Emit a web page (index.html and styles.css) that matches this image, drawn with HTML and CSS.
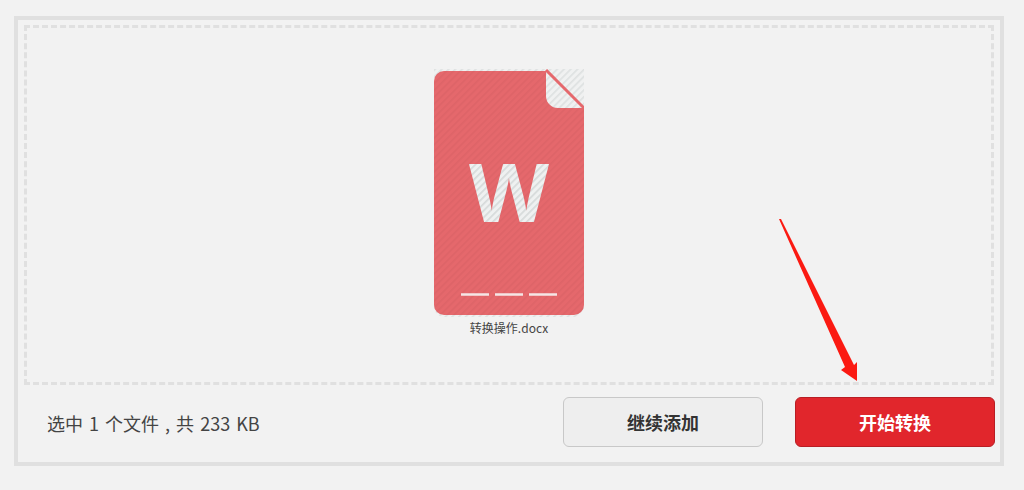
FILE: index.html
```html
<!DOCTYPE html>
<html lang="zh">
<head>
<meta charset="utf-8">
<title>转换操作</title>
<link rel="stylesheet" href="styles.css">
</head>
<body>
<main class="panel">
  <section class="dropzone">
    <figure class="file">
      <svg class="file-icon" width="150" height="248" viewBox="0 0 150 248" aria-hidden="true">
        <defs>
          <pattern id="hatch-bg" width="4.8" height="4.8" patternUnits="userSpaceOnUse" patternTransform="rotate(45)">
            <rect width="4.8" height="4.8" fill="#eff1f1"/>
            <rect width="1.7" height="4.8" fill="#d6dada"/>
          </pattern>
          <pattern id="hatch-red" width="4.8" height="4.8" patternUnits="userSpaceOnUse" patternTransform="rotate(45)">
            <rect width="4.8" height="4.8" fill="#e5686c"/>
            <rect width="1.7" height="4.8" fill="#de6468"/>
          </pattern>
        </defs>
        <path d="M0 0H150V238a10 10 0 0 1-10 10H10a10 10 0 0 1-10-10Z" fill="url(#hatch-bg)" opacity=".7"/>
        <path d="M10 2H112V27a12 12 0 0 0 12 12H150V236a10 10 0 0 1-10 10H10a10 10 0 0 1-10-10V12A10 10 0 0 1 10 2Z" fill="url(#hatch-red)"/>
        <path d="M112 1 150 39" stroke="#e5686c" stroke-width="3" fill="none"/>
        <text class="file-letter" x="75" y="153" text-anchor="middle" textLength="80" lengthAdjust="spacingAndGlyphs" fill="url(#hatch-bg)">W</text>
        <path d="M27 225.500H55M61 225.500H89M95 225.500H123" stroke="#f5e6e6" stroke-width="2.500" fill="none"/>
      </svg>
      <figcaption class="file-name">转换操作.docx</figcaption>
    </figure>
  </section>
  <footer class="footer">
    <p class="summary">选中 1 个文件 , 共 233 KB</p>
    <div class="actions">
      <button class="btn btn-add" type="button">继续添加</button>
      <button class="btn btn-start" type="button">开始转换</button>
    </div>
  </footer>
</main>
<svg class="arrow" width="90" height="170" viewBox="0 0 90 170" aria-hidden="true">
  <path d="M3 3 5 3 78 149 81 146 81 165 65 154 69 151Z" fill="#fb1a12"/>
</svg>
</body>
</html>
```
FILE: styles.css
```css
* { box-sizing: border-box; }
html, body { margin: 0; padding: 0; }
body {
  width: 1024px;
  height: 490px;
  padding: 16px 20px 24px 14px;
  background: #f2f2f2;
  overflow: hidden;
  font-family: "Noto Sans CJK SC", "Liberation Sans", sans-serif;
  color: #333;
}
.panel {
  width: 990px;
  height: 450px;
  border: 4px solid #e0e0e0;
  padding: 5px 6px 0;
  display: flex;
  flex-direction: column;
}
.dropzone {
  height: 360px;
  border: 3px dashed #e0e0e0;
  display: flex;
  justify-content: center;
  padding-top: 41px;
}
.file {
  margin: 0;
  width: 150px;
  display: flex;
  flex-direction: column;
  align-items: center;
}
.file-icon { display: block; flex: none; }
.file-letter {
  font-family: "Open Sans", "Liberation Sans", sans-serif;
  font-weight: 700;
  font-size: 81px;
}
.file-name {
  margin-top: 3px;
  font-size: 12px;
  line-height: 16px;
  white-space: nowrap;
  color: #444;
}
.footer {
  flex: 1;
  display: flex;
  align-items: flex-start;
  justify-content: space-between;
  padding: 12px 0 0 23px;
  margin-right: -1px;
}
.summary {
  margin: 0;
  height: 50px;
  line-height: 52px;
  font-size: 18px;
  color: #444;
  word-spacing: 2px;
}
.actions { display: flex; gap: 32px; }
.btn {
  width: 200px;
  height: 50px;
  border-radius: 6px;
  font-family: "Noto Sans CJK SC", "Liberation Sans", sans-serif;
  font-size: 18px;
  font-weight: 700;
  padding: 0;
}
.btn-add {
  background: #eee;
  border: 1px solid #c8c8c8;
  color: #333;
}
.btn-start {
  background: #e1262c;
  border: 1px solid #b81e24;
  color: #fff;
}
.arrow {
  position: absolute;
  left: 776px;
  top: 216px;
}
```
